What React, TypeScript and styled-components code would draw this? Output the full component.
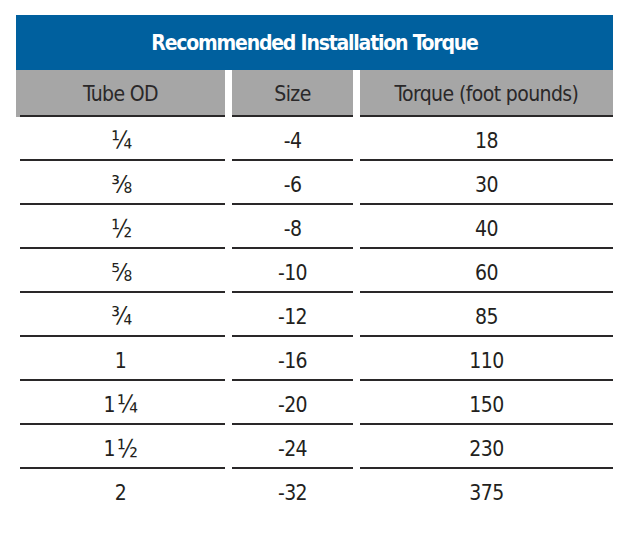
import React from 'react'
import styled, { createGlobalStyle } from 'styled-components'

const GlobalStyle = createGlobalStyle`
  html, body {
    margin: 0;
    padding: 0;
    background: #ffffff;
  }
  body {
    font-family: 'DejaVu Sans Condensed', 'Liberation Sans', sans-serif;
  }
`

const Page = styled.div`
  padding: 15px 20px 0 16px;
  width: 597px;
`

const Banner = styled.div`
  height: 55px;
  background: #00609e;
  color: #ffffff;
  display: flex;
  align-items: center;
  justify-content: center;
  font-weight: 700;
  font-size: 21px;
  letter-spacing: -1.2px;
  padding-top: 1px;
  box-sizing: border-box;
`

const Grid = styled.div`
  display: grid;
  grid-template-columns: 209px 121px 253px;
  column-gap: 7px;
`

const HeadCell = styled.div<{ $inset?: boolean }>`
  height: 47px;
  box-sizing: border-box;
  background: #a6a6a6;
  color: #2a2829;
  font-size: 21px;
  letter-spacing: -0.6px;
  display: flex;
  align-items: center;
  justify-content: center;
  position: relative;
  padding-top: 1px;

  &::after {
    content: '';
    position: absolute;
    left: ${({ $inset }) => ($inset ? '4px' : '0')};
    right: 0;
    bottom: 0;
    height: 2px;
    background: #2a2829;
  }
`

const Cell = styled.div<{ $inset?: boolean; $last?: boolean }>`
  height: 44px;
  box-sizing: border-box;
  color: #231f20;
  font-size: 21px;
  letter-spacing: -0.6px;
  display: flex;
  align-items: center;
  justify-content: center;
  padding-top: 3px;
  position: relative;

  &::after {
    content: '';
    display: ${({ $last }) => ($last ? 'none' : 'block')};
    position: absolute;
    left: ${({ $inset }) => ($inset ? '4px' : '0')};
    right: 0;
    bottom: 0;
    height: 2px;
    background: #2a2829;
  }
`

const Frac = styled.span`
  font-size: 24px;
  margin-left: 2px;
`

const rows: [string, string, string, string][] = [
  ['', '¼', '-4', '18'],
  ['', '⅜', '-6', '30'],
  ['', '½', '-8', '40'],
  ['', '⅝', '-10', '60'],
  ['', '¾', '-12', '85'],
  ['1', '', '-16', '110'],
  ['1', '¼', '-20', '150'],
  ['1', '½', '-24', '230'],
  ['2', '', '-32', '375'],
]

export default function App() {
  return (
    <>
      <GlobalStyle />
      <Page>
        <Banner>Recommended Installation Torque</Banner>
        <Grid>
          <HeadCell $inset>Tube OD</HeadCell>
          <HeadCell>Size</HeadCell>
          <HeadCell>Torque (foot pounds)</HeadCell>
          {rows.map(([whole, frac, size, torque], i) => {
            const last = i === rows.length - 1
            return (
              <React.Fragment key={size}>
                <Cell $inset $last={last}>
                  {whole}
                  {frac && <Frac>{frac}</Frac>}
                </Cell>
                <Cell $last={last}>{size}</Cell>
                <Cell $last={last}>{torque}</Cell>
              </React.Fragment>
            )
          })}
        </Grid>
      </Page>
    </>
  )
}
